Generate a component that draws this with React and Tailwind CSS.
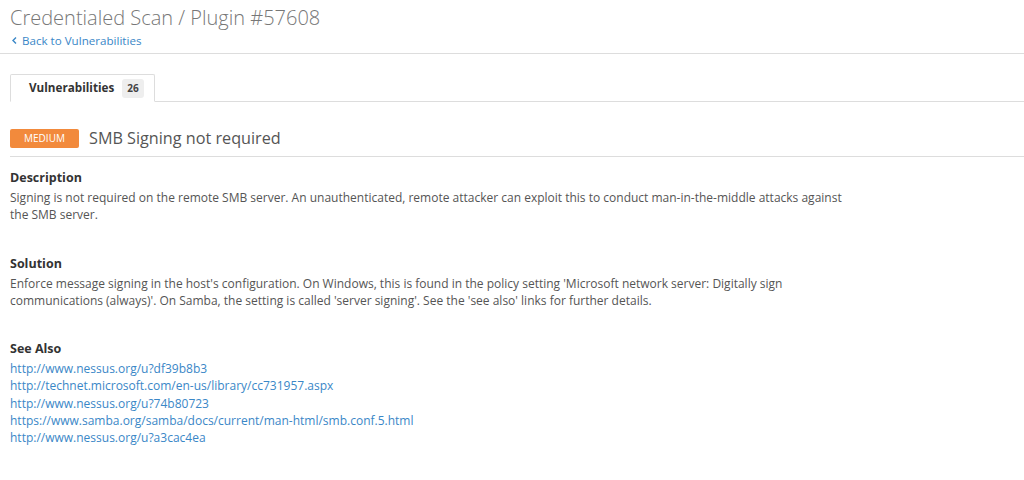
import React from "react";

const links = [
  "http://www.nessus.org/u?df39b8b3",
  "http://technet.microsoft.com/en-us/library/cc731957.aspx",
  "http://www.nessus.org/u?74b80723",
  "https://www.samba.org/samba/docs/current/man-html/smb.conf.5.html",
  "http://www.nessus.org/u?a3cac4ea",
];

function Section({ title, children }) {
  return (
    <div className="mb-[31px]">
      <h4 className="text-[12.5px] font-bold text-[#333] leading-[18px]">{title}</h4>
      <div className="mt-[2px]">{children}</div>
    </div>
  );
}

export default function App() {
  return (
    <div className="w-[1024px] h-[480px] bg-white overflow-hidden font-['Open_Sans',sans-serif] text-[#555]">
      {/* Page header */}
      <div className="border-b border-[#ddd] px-[10px] pt-[4px] pb-[4px]">
        <h1 className="text-[20px] leading-[28px] text-[#777] font-light">
          Credentialed Scan / Plugin #57608
        </h1>
        <a className="flex items-center gap-[5px] text-[11.6px] leading-[17px] text-[#3a87c7]">
          <svg width="5" height="7" viewBox="0 0 5 7" className="ml-[2px]">
            <path d="M4 0.5 L1 3.5 L4 6.5" fill="none" stroke="currentColor" strokeWidth="1.4" />
          </svg>
          Back to Vulnerabilities
        </a>
      </div>

      <div className="pl-[10px]">
        {/* Tabs */}
        <div className="mt-[20px] flex border-b border-[#ddd]">
          <div className="-mb-px h-[28px] w-[145px] border border-b-white border-[#ddd] rounded-t-[2px] bg-white flex items-center pl-[18px] gap-[8px]">
            <span className="text-[11.7px] font-bold text-[#333]">Vulnerabilities</span>
            <span className="bg-[#eee] rounded-[3px] px-[5px] h-[19px] flex items-center text-[10px] font-bold text-[#444]">26</span>
          </div>
        </div>

        {/* Title */}
        <div className="mt-[25px] flex items-center gap-[10px] border-b border-[#ddd] pb-[7px]">
          <span className="w-[69px] h-[19px] rounded-[2px] bg-[#f28a3c] text-white text-[10px] flex items-center justify-center uppercase">
            Medium
          </span>
          <h2 className="text-[16.2px] leading-[22px] text-[#555]">SMB Signing not required</h2>
        </div>

        <div className="pt-[12px] w-[850px] text-[12px] leading-[17.3px]">
          <Section title="Description">
            <p>
              Signing is not required on the remote SMB server. An unauthenticated, remote attacker can exploit this to conduct man-in-the-middle attacks against the SMB server.
            </p>
          </Section>
          <Section title="Solution">
            <p>
              Enforce message signing in the host's configuration. On Windows, this is found in the policy setting 'Microsoft network server: Digitally sign communications (always)'. On Samba, the setting is called 'server signing'. See the 'see also' links for further details.
            </p>
          </Section>
          <Section title="See Also">
            {links.map((l) => (
              <a key={l} className="block text-[#3a87c7]">{l}</a>
            ))}
          </Section>
        </div>
      </div>
    </div>
  );
}
